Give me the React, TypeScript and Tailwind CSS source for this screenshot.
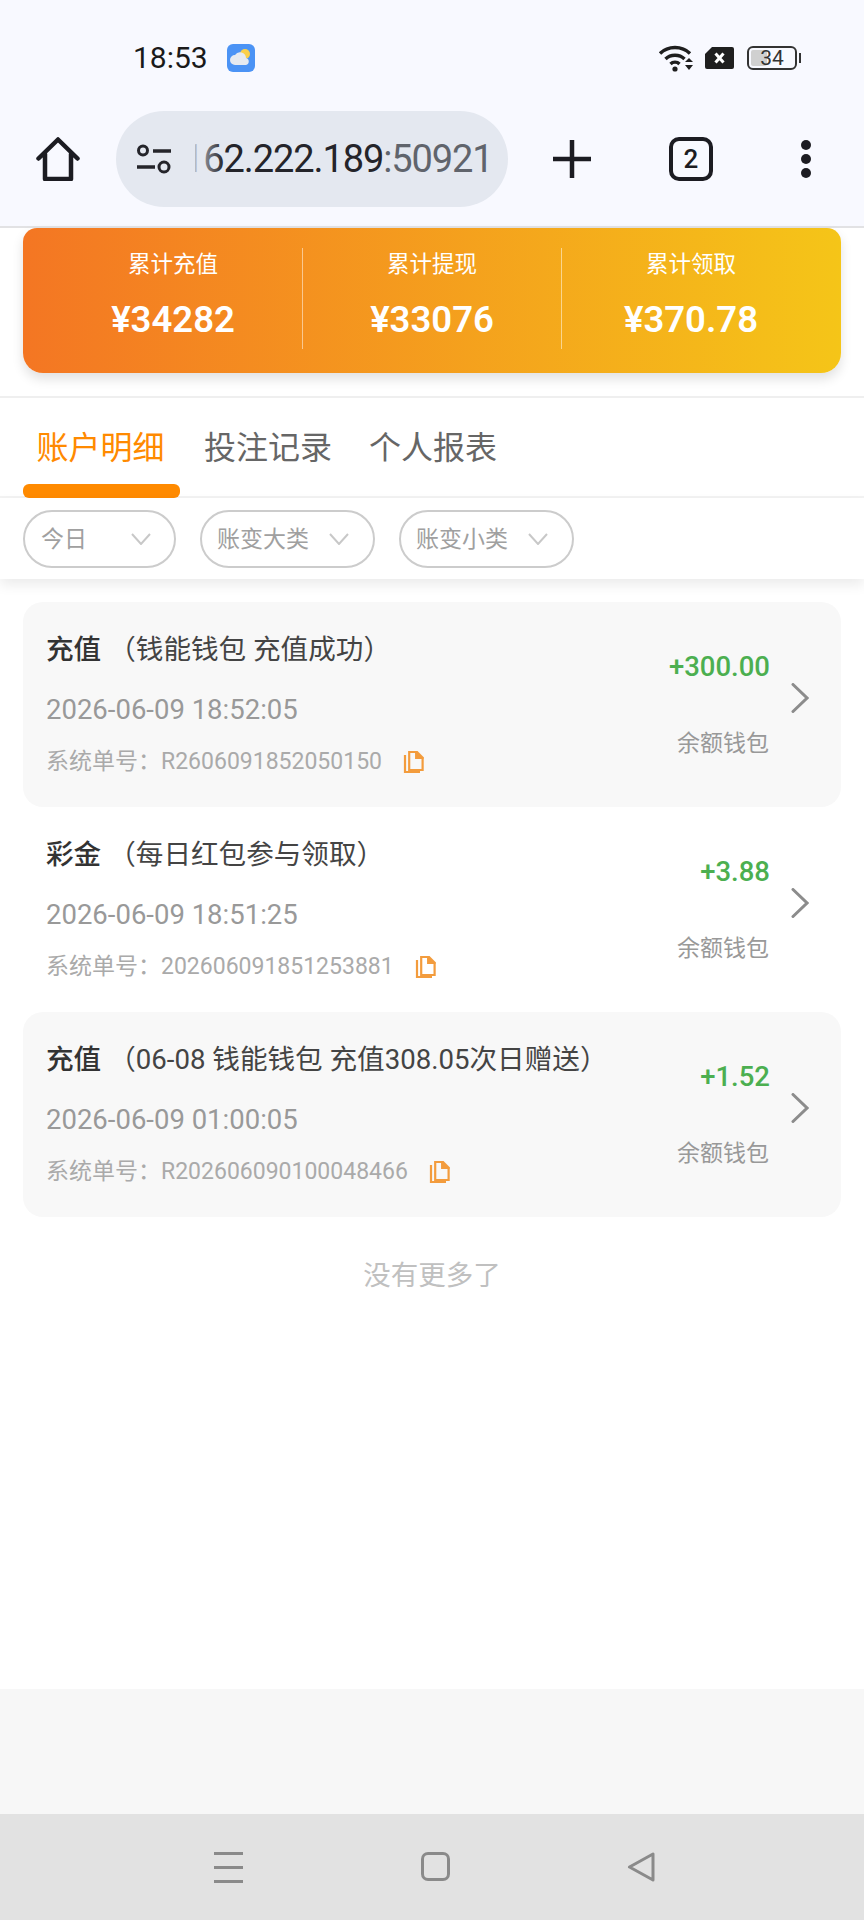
const records = [
  {
    type: "充值",
    note: "（钱能钱包 充值成功）",
    time: "2026-06-09 18:52:05",
    orderNo: "R2606091852050150",
    amount: "+300.00",
    tinted: true,
  },
  {
    type: "彩金",
    note: "（每日红包参与领取）",
    time: "2026-06-09 18:51:25",
    orderNo: "202606091851253881",
    amount: "+3.88",
    tinted: false,
  },
  {
    type: "充值",
    note: "（06-08 钱能钱包 充值308.05次日赠送）",
    time: "2026-06-09 01:00:05",
    orderNo: "R202606090100048466",
    amount: "+1.52",
    tinted: true,
  },
];

const totals = [
  { label: "累计充值", value: "¥34282" },
  { label: "累计提现", value: "¥33076" },
  { label: "累计领取", value: "¥370.78" },
];

function CopyIcon() {
  return (
    <svg width="22" height="24" viewBox="0 0 22 24" fill="none" className="ml-[21px] shrink-0">
      <path d="M2 5v17h15" stroke="#f39c3d" strokeWidth="2.2" />
      <path d="M6.200 2h7v6h6.400v12H6.200z" stroke="#f39c3d" strokeWidth="2.2" />
      <path d="M12.500 1h2l6 6v2h-8z" fill="#f39c3d" />
    </svg>
  );
}

function FilterChevron() {
  return (
    <svg width="20" height="12" viewBox="0 0 20 12" fill="none">
      <path d="M1 1l9 10 9-10" stroke="#c8c8c8" strokeWidth="2" />
    </svg>
  );
}

function StatusBar() {
  return (
    <div className="flex h-[111px] items-center pl-[133px] pr-[63px] pt-[5px]">
      <span className="text-[30px] leading-none text-[#1a1a1a]">18:53</span>
      <svg width="28" height="28" viewBox="0 0 28 28" className="ml-[19px]">
        <rect width="28" height="28" rx="6" fill="#4b93f5" />
        <circle cx="18" cy="10" r="5" fill="#fbd04a" />
        <path d="M8 21a5 5 0 0 1 0-10 6 6 0 0 1 11 3 3.600 3.600 0 0 1 0 7z" fill="#e6eaf0" />
      </svg>
      <div className="ml-auto flex items-center">
        <svg width="37" height="28" viewBox="0 0 37 28" fill="none">
          <path d="M2 9.500c8-8 22-8 30 0" stroke="#1f1f1f" strokeWidth="3.400" />
          <path d="M7.500 15c5-5 14-5 19 0" stroke="#1f1f1f" strokeWidth="3.400" />
          <path d="M12.500 20c2.500-2.500 6.500-2.500 9 0" stroke="#1f1f1f" strokeWidth="3.400" />
          <circle cx="17" cy="25" r="2.600" fill="#1f1f1f" />
          <path d="M27 18l4-4 4 4zM27 21l4 5 4-5z" fill="#1f1f1f" />
        </svg>
        <svg width="29" height="22" viewBox="0 0 29 22" className="ml-[10px]">
          <path d="M7 0h20a2 2 0 0 1 2 2v18a2 2 0 0 1-2 2H2a2 2 0 0 1-2-2V7z" fill="#1f1f1f" />
          <path d="M10.500 6.500l8 9m0-9l-8 9" stroke="#fff" strokeWidth="3" />
        </svg>
        <div className="relative ml-[13px] flex h-[24px] w-[50px] items-center justify-center rounded-[6px] border-2 border-[#333] text-[21px] leading-none text-[#333]">
          <div className="absolute inset-y-[2px] left-[2px] w-[16px] rounded-[2px] bg-[#d0d0d0]" />
          <span className="relative">34</span>
          <div className="absolute -right-[6px] top-[5px] h-[10px] w-[2px] bg-[#333]" />
        </div>
        <div className="w-[4px]" />
      </div>
    </div>
  );
}

function Toolbar() {
  return (
    <div className="flex h-[96px] items-center">
      <svg width="44" height="44" viewBox="0 0 44 44" fill="none" className="ml-[36px]">
        <path d="M2.500 21.500L22 2.500l19.500 19M9 17v25h26V17" stroke="#1c1c22" strokeWidth="4.500" strokeLinejoin="round" strokeLinecap="round" />
      </svg>
      <div className="relative ml-[36px] flex h-[96px] w-[392px] items-center rounded-full bg-[#e4e8f0] pl-[20px]">
        <svg width="36" height="30" viewBox="0 0 36 30" fill="none">
          <circle cx="7" cy="6.500" r="4.500" stroke="#24242a" strokeWidth="3" />
          <path d="M17 7h18M1 23h18" stroke="#24242a" strokeWidth="3.400" />
          <circle cx="28" cy="23" r="5" stroke="#24242a" strokeWidth="3" />
        </svg>
        <div className="relative ml-[22px] w-[298px] whitespace-nowrap text-[38px] leading-[48px] tracking-[-1.1px] text-[#24242a]">
          <span className="-ml-[11px] inline-block">162.222.189</span>
          <span className="text-[#60646c]">:50921</span>
          {/* url scrolled under the fade: hides the flag of the leading 1 */}
          <div className="absolute inset-y-0 -left-[14px] w-[15px] bg-[#e4e8f0]" />
          <div className="absolute inset-y-0 left-0 w-[30px] bg-gradient-to-r from-[#e4e8f0]/80 to-[#e4e8f0]/0" />
        </div>
      </div>
      <svg width="38" height="38" viewBox="0 0 38 38" className="ml-[45px]">
        <path d="M19 0v38M0 19h38" stroke="#1c1c22" strokeWidth="4.500" />
      </svg>
      <div className="ml-[78px] flex h-[44px] w-[44px] items-center justify-center rounded-[10px] border-[4px] border-[#1c1c22] text-[26px] font-medium leading-none text-[#1c1c22]">
        2
      </div>
      <div className="ml-[88px] flex flex-col gap-[4px]">
        <div className="h-[10px] w-[10px] rounded-full bg-[#1c1c22]" />
        <div className="h-[10px] w-[10px] rounded-full bg-[#1c1c22]" />
        <div className="h-[10px] w-[10px] rounded-full bg-[#1c1c22]" />
      </div>
    </div>
  );
}

function RecordRow({ record }: { record: (typeof records)[number] }) {
  return (
    <div className={`flex h-[205px] rounded-[20px] pl-[23px] ${record.tinted ? "bg-[#f8f8f8]" : "bg-white"}`}>
      <div className="flex min-w-0 flex-1 flex-col pt-[28px]">
        <div className="flex h-[40px] items-center whitespace-nowrap text-[27.600px] leading-[40px] text-[#444]">
          <span className="font-medium text-[#333]">{record.type}</span>
          <span className="ml-[7px]">{record.note}</span>
        </div>
        <div className="mt-[20px] h-[40px] text-[27.500px] leading-[40px] text-[#999]">{record.time}</div>
        <div className="mt-[16px] flex h-[32px] items-center text-[23px] leading-[32px] text-[#aaa]">
          <span>系统单号：</span>
          <span>{record.orderNo}</span>
          <CopyIcon />
        </div>
      </div>
      <div className="flex w-[200px] flex-col items-end pt-[45px]">
        <div className="h-[40px] text-[27.500px] font-medium leading-[40px] text-[#4caf50]">{record.amount}</div>
        <div className="mr-[1px] mt-[41px] h-[32px] text-[23px] leading-[32px] text-[#999]">余额钱包</div>
      </div>
      <svg width="18" height="30" viewBox="0 0 18 30" fill="none" className="ml-[21px] mr-[32px] mt-[81px] shrink-0">
        <path d="M2 1.500L16 15 2 28.500" stroke="#8c8c8c" strokeWidth="3" strokeLinecap="round" />
      </svg>
    </div>
  );
}

export default function App() {
  return (
    <div className="flex h-[1920px] w-[864px] flex-col overflow-hidden bg-white font-['Roboto','Noto_Sans_CJK_SC',sans-serif]">
      <header className="h-[228px] shrink-0 border-b-2 border-[#e2e2e4] bg-[#f8f9ff]">
        <StatusBar />
        <Toolbar />
      </header>

      <section className="h-[170px] shrink-0 border-b-2 border-[#efefef] px-[23px]">
        <div className="flex h-[145px] items-start rounded-b-[20px] rounded-t-[14px] bg-linear-to-r/srgb from-[#f47623] to-[#f5c518] px-[21px] pt-[20px] shadow-[0_6px_12px_rgba(0,0,0,0.12)]">
          {totals.map((item, i) => (
            <div
              key={item.label}
              className={`flex h-[101px] flex-1 flex-col items-center text-white ${i < 2 ? "border-r border-white/50" : ""}`}
            >
              <div className="mt-[-1px] h-[34px] text-[22.500px] leading-[34px]">{item.label}</div>
              <div className="mt-[17px] h-[44px] text-[36.500px] font-semibold leading-[44px]">{item.value}</div>
            </div>
          ))}
        </div>
      </section>

      <nav className="flex h-[100px] shrink-0 items-start border-b-2 border-[#f3f3f3] pl-[23px] text-[32px] leading-[44px] text-[#666]">
        <div className="flex h-[100px] w-[157px] flex-col items-center justify-between pt-[28px] text-[#ff8a00]">
          <span className="mr-[2px]">账户明细</span>
          <div className="h-[14px] w-full rounded-[6px] bg-[#ff8a00]" />
        </div>
        <span className="ml-[24px] mt-[28px]">投注记录</span>
        <span className="ml-[37px] mt-[28px]">个人报表</span>
      </nav>

      <div className="relative flex h-[81px] shrink-0 items-start gap-[24px] bg-white pl-[23px] pt-[12px] text-[23px] leading-none text-[#a0a0a0] shadow-[0_6px_12px_rgba(0,0,0,0.08)]">
        <div className="flex h-[58px] w-[153px] items-center justify-between rounded-full border-2 border-[#ccc] pl-[16px] pr-[23px]">
          <span>今日</span>
          <FilterChevron />
        </div>
        <div className="flex h-[58px] w-[175px] items-center justify-between rounded-full border-2 border-[#ccc] pl-[15px] pr-[24px]">
          <span>账变大类</span>
          <FilterChevron />
        </div>
        <div className="flex h-[58px] w-[175px] items-center justify-between rounded-full border-2 border-[#ccc] pl-[15px] pr-[24px]">
          <span>账变小类</span>
          <FilterChevron />
        </div>
      </div>

      <main className="flex-1 px-[23px] pt-[23px]">
        {records.map((record) => (
          <RecordRow key={record.orderNo} record={record} />
        ))}
        <div className="mt-[39px] text-center text-[27.500px] leading-[40px] text-[#c0c0c0]">没有更多了</div>
      </main>

      <div className="h-[125px] shrink-0 bg-[#f7f7f7]" />

      <footer className="flex h-[106px] shrink-0 items-start bg-[#e2e2e2] pt-[38px]">
        <div className="ml-[214px] flex w-[29px] flex-col gap-[11px]">
          <div className="h-[3px] bg-[#8a8a8a]" />
          <div className="h-[3px] bg-[#8a8a8a]" />
          <div className="h-[3px] bg-[#8a8a8a]" />
        </div>
        <div className="ml-[178px] h-[29px] w-[29px] rounded-[7px] border-[3px] border-[#8a8a8a]" />
        <svg width="30" height="30" viewBox="0 0 30 30" fill="none" className="ml-[177px]">
          <path d="M2.500 15L26 2v26z" stroke="#8a8a8a" strokeWidth="3" strokeLinejoin="round" />
        </svg>
      </footer>
    </div>
  );
}
